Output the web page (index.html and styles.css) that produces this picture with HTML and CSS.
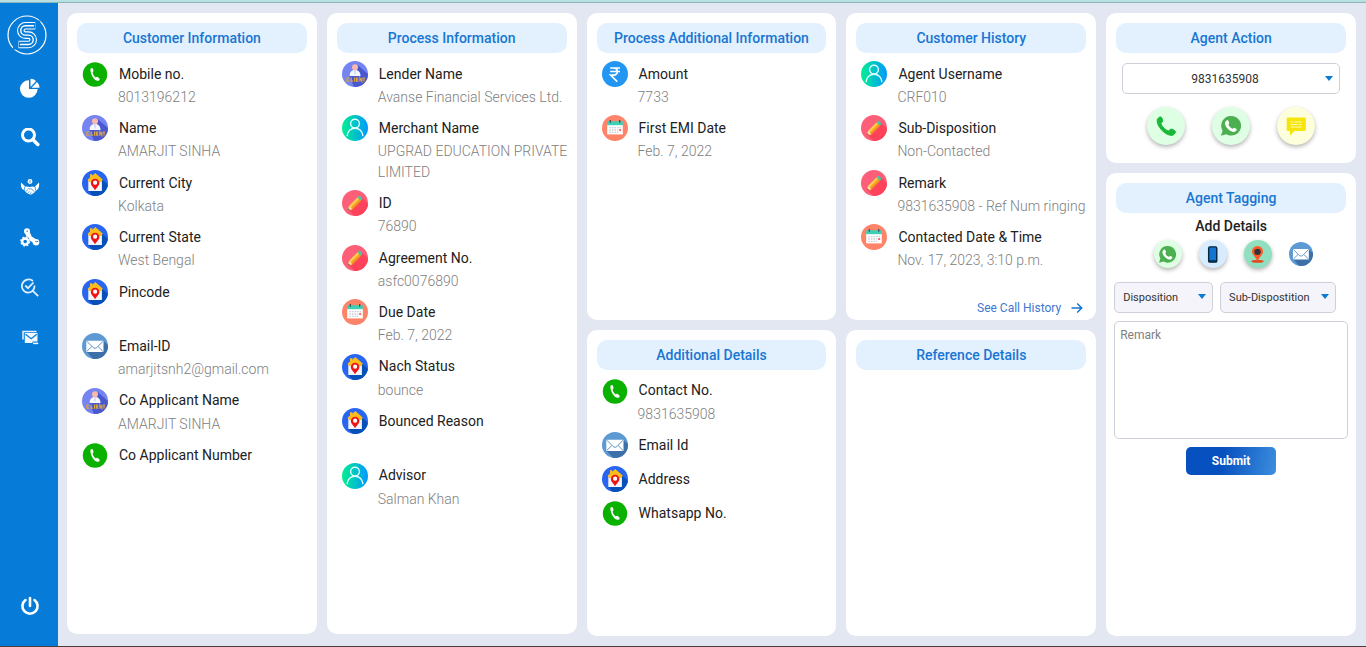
FILE: index.html
```html
<!DOCTYPE html>
<html lang="en">
<head>
<meta charset="utf-8">
<meta name="viewport" content="width=device-width, initial-scale=1">
<title>Agent Dashboard</title>
<link rel="stylesheet" href="styles.css">
</head>
<body>
<svg class="sprite" width="0" height="0" aria-hidden="true">
  <defs>
    <linearGradient id="g-user" x1="0" y1="0" x2="1" y2="0"><stop offset="0" stop-color="#00f090"/><stop offset="1" stop-color="#0098ff"/></linearGradient>
    <clipPath id="disc"><circle cx="13" cy="13" r="13"/></clipPath>
    <symbol id="i-phone" viewBox="0 0 26 26">
      <circle cx="13" cy="13.500" r="12.200" fill="#0ab100"/>
      <path d="M8.400 9.200C8 7.800 9.200 6.800 10.200 7c.7.2 1.300 2.200 1.300 3 0 .7-.9 1-.9 1.500.3 1.800 1.500 3.700 2.900 4.700.6.300 1.200-.6 2-.3.900.4 2.200 1.700 2.200 2.400-.2 1.300-1.800 1.900-3.200 1.300C11.300 18.200 8.900 13.400 8.400 9.200z" fill="#fff"/>
    </symbol>
    <symbol id="i-client" viewBox="0 0 26 26">
      <g clip-path="url(#disc)"><rect width="26" height="26" fill="#7584f1"/>
      <path d="M15.500 4L26 13v13H12L7 14z" fill="#4a58d0"/></g>
      <path d="M7.500 15C7.600 10.800 9.800 9 13 9s5.400 1.800 5.500 6z" fill="#f5f6ff"/>
      <path d="M11.800 9h2.600l-.5 4-.9 1-.8-1z" fill="#d8def5"/>
      <circle cx="13" cy="6.300" r="3" fill="#f9b9ab"/>
      <path d="M7.300 17H4.900v3.200h2.400M9.200 16.500v3.700h1.900M12.600 16.500v4.200M16.400 17h-2v3.200h2M14.500 18.600h1.600M17.900 20.700v-3.700l2 3.300v-3.500M20.900 17h2.200M22 17v3.500" fill="none" stroke="#d9a441" stroke-width="1.200"/>
    </symbol>
    <symbol id="i-home" viewBox="0 0 26 26">
      <g clip-path="url(#disc)"><rect width="26" height="26" fill="#2865f0"/>
      <path d="M19.500 9L26 15v11H11l-5-5z" fill="#0650b8"/></g>
      <path d="M6.300 9.500h13.600V21H6.300z" fill="#f4f5fb"/>
      <path d="M8 4.200h2.300v1.500L13.300 3l7.400 6.600-1.200 2.400H7L5.700 9.600 8 7.500z" fill="#fdbc1c"/>
      <path d="M13.100 20.300c-1.500-3-4.300-4.600-4.300-7.300a4.300 4.300 0 018.600 0c0 2.700-2.800 4.300-4.300 7.300z" fill="#ee1414"/>
      <circle cx="13.100" cy="12.700" r="2.100" fill="#fff"/>
    </symbol>
    <symbol id="i-mail" viewBox="0 0 26 26">
      <g clip-path="url(#disc)"><rect width="26" height="26" fill="#5d9ad3"/>
      <path d="M21.500 8L26 12v14H11l-6.500-7.500z" fill="#3d6fa8"/></g>
      <rect x="4.300" y="7.700" width="17.200" height="11.200" rx=".6" fill="#fff"/>
      <path d="M4.800 8.200l6.300 6.300c1.200 1 2.600 1 3.800 0l6.200-6.300M4.800 18.400l5-4.900M21 18.400l-4.900-4.900" fill="none" stroke="#4c86bf" stroke-width=".9"/>
    </symbol>
    <symbol id="i-user" viewBox="0 0 26 26">
      <circle cx="13" cy="13" r="13" fill="url(#g-user)"/>
      <circle cx="13" cy="8.600" r="4.400" fill="none" stroke="#e4fffa" stroke-width="1.400"/>
      <path d="M5.200 20.600c.3-4.400 3.600-7.300 7.800-7.300s7.500 2.900 7.800 7.300" fill="none" stroke="#e4fffa" stroke-width="1.400" stroke-linecap="round"/>
    </symbol>
    <symbol id="i-pencil" viewBox="0 0 26 26">
      <g clip-path="url(#disc)"><rect width="26" height="26" fill="#fe5f78"/>
      <path d="M19.500 7L26 13.500V26H12.500L6.500 19.800z" fill="#fe425a"/></g>
      <path d="M6 20.200l1.100-4.300 8.500-8.500 3.300 3.300-8.500 8.500z" fill="#fdb42a"/>
      <path d="M9.200 20.400l-1.100-1.100 9.700-9.700 1.100 1.100-8.500 8.500z" fill="#ee9420"/>
      <path d="M7.100 15.900l8.500-8.500 1.100 1.100-8.700 8.700z" fill="#ffd45c"/>
      <path d="M15.600 7.400l1.100-1.100c.5-.5 1.200-.5 1.700 0L20 7.900c.5.500.5 1.200 0 1.700l-1.100 1.100z" fill="#46c8a4"/>
      <path d="M6 20.200l1.100-4.300 3.200 3.300z" fill="#fbe0b5"/><path d="M6 20.200l.5-1.900 1.400 1.400z" fill="#704a43"/>
    </symbol>
    <symbol id="i-calendar" viewBox="0 0 26 26">
      <circle cx="13" cy="13" r="13" fill="#fd8469"/>
      <path d="M5.200 9.500h15.600v9.900H5.200z" fill="#fff"/><path d="M5.200 6.200h15.600v4H5.200z" fill="#3fcfb4"/>
      <path d="M8.300 5v2.700M17.700 5v2.700" stroke="#444b58" stroke-width="1.300"/>
      <path d="M7.300 12.600h11.800M7.300 15h8.900M7.300 17.400h8.900" stroke="#c9d0d8" stroke-width="1.300" stroke-dasharray="1.600 1"/>
      <path d="M17.200 14.200h1.900v1.700h-1.900z" fill="#ff4f4f"/>
    </symbol>
    <symbol id="i-rupee" viewBox="0 0 26 26">
      <circle cx="13" cy="13" r="13" fill="#2396f3"/>
      <path d="M8.200 7h9.800M8.200 10.500h9.800M8.400 7h3c5.200 0 5.200 7.100 0 7.100H8.700l6.500 6.600" fill="none" stroke="#fff" stroke-width="1.700"/>
    </symbol>
    <symbol id="i-whatsapp" viewBox="0 0 20 20">
      <path d="M10.200 0a9.800 9.800 0 11-4.800 18.300L0 19.800l1.600-5A9.800 9.800 0 0110.200 0z" fill="#4caf50"/>
      <path d="M4.700 5.300c1.300-1.600 2.600-1.300 3 .2l.6 1.500c.2.700-.9 1.200-.9 1.800.9 1.800 2.200 3.200 4 3.900.6.200 1.100-1.300 1.800-1l2 1c.6.300.6.900.3 1.600-1 1.900-3.300 2-5.500.9-2.800-1.400-4.600-3.400-5.700-6.200-.5-1.400-.4-2.600.4-3.700z" fill="#fff"/>
    </symbol>
  </defs>
</svg>

<div class="app">
  <nav class="sidebar" aria-label="Main">
    <a class="logo" href="#" aria-label="Home">
      <svg viewBox="0 0 40 40" fill="none">
        <circle cx="20" cy="20" r="19" stroke="#fff" stroke-width="1.200"/>
        <path d="M28 10.700H18.500a4.700 4.700 0 000 9.400h3a4.700 4.700 0 010 9.400H12" stroke="#fff" stroke-width="7.600" stroke-linecap="round"/>
        <path d="M28 10.700H18.500a4.700 4.700 0 000 9.400h3a4.700 4.700 0 010 9.400H12" stroke="#067bd8" stroke-width="5.400"/>
        <path d="M27 10.700H18.500a4.700 4.700 0 000 9.400h3a4.700 4.700 0 010 9.400H13" stroke="#fff" stroke-width="1.400"/>
        <path d="M28.300 5.500h5v10h-5zM6 24.500h5.500v10H6z" fill="#067bd8"/>
      </svg>
    </a>
    <ul class="nav-list">
      <li><a href="#" aria-label="Dashboard"><svg viewBox="0 0 20 20" fill="#fff"><path d="M9 2.200V11h8.600A8.800 8.800 0 119 2.200z"/><path d="M10.500.8v8.100l5.500-6A8.300 8.300 0 0010.500.8z"/><path d="M17 4l-5.500 5.700h8A8.500 8.500 0 0017 4z"/></svg></a></li>
      <li><a href="#" aria-label="Search"><svg viewBox="0 1 20 20" fill="none" stroke="#fff"><circle cx="8.500" cy="8" r="6" stroke-width="3"/><path d="M13 12.700l4.800 4.800" stroke-width="3.500" stroke-linecap="round"/></svg></a></li>
      <li><a href="#" aria-label="Settlements"><svg viewBox="0 0 20 20" fill="#fff"><circle cx="10" cy="3.500" r="2.400"/><path d="M10 2.200v2.600" stroke="#067bd8" stroke-width=".8"/><path d="M1 4.500l4.500 4.300c1.800-.9 3.300.7 4.500.2 1.600-.7 2.800-.9 4.500 0L19 4.500c.7 4-.8 7.500-3 8-1 1.700-2.600 3.100-4.200 3.700-1 .4-2.500.2-3.900-.7-1.200-.7-2.500-1.800-3.400-3.300C1.500 11.500.5 8 1 4.500z"/><path d="M4.800 8.700l-.6 3.500M15.200 8.700l.5 3.800M8.200 10.500c1.500 1 2.500-.4 3.700.8l2.700 2.500M6 13.200l2-1.500M8 14.700l1.600-1.500M10 15.700l1.400-1.300" stroke="#067bd8" stroke-width=".7" fill="none"/></svg></a></li>
      <li><a href="#" aria-label="Process setup"><svg viewBox="0 0 20 20"><g fill="#fff"><circle cx="7" cy="3.300" r="3"/><circle cx="16" cy="14.300" r="3.300"/><path d="M4.700 4l4.500-1.200 2.500 5.700 5.500 3.500-1.500 4-6.200-3.500-3-3.500z"/></g><circle cx="5.200" cy="13.500" r="5" fill="#067bd8"/><circle cx="5.200" cy="13.500" r="3" fill="none" stroke="#fff" stroke-width="2.400"/><circle cx="5.200" cy="13.500" r="4.400" fill="none" stroke="#fff" stroke-width="1.300" stroke-dasharray="1.900 1.550"/><path d="M15.300 13.200l1.400.6 1.500-.7M6.500 3.600l1.500-.8" stroke="#067bd8" fill="none"/></svg></a></li>
      <li><a href="#" aria-label="Review"><svg viewBox="0 0 20 20" fill="none" stroke="#e0f0ff" stroke-width="1.800"><path d="M13 3A6.700 6.700 0 107.800 14.700 6.700 6.700 0 0014.500 7.500M12.800 12.800l5.400 5.400"/><path d="M5.300 7.500l2.700 2.700 5.500-5.700"/></svg></a></li>
      <li><a href="#" aria-label="Messages"><svg viewBox="0 0 20 20"><path d="M3 11.500V3.500h13.500" fill="none" stroke="#e6f3ff" stroke-width="1.500"/><path d="M4.800 5h12.700v10H4.800z" fill="#f2f9ff"/><path d="M5.500 6.200l5.700 4.600 5.600-4.600" fill="none" stroke="#067bd8" stroke-width="1.200"/><path d="M12.500 13.500h6v3.500h-6z" fill="#067bd8"/><path d="M13 15.400h5.200" stroke="#fff" stroke-width="1.500"/></svg></a></li>
    </ul>
    <a class="power" href="#" aria-label="Log out"><svg viewBox="0 0 20 20" fill="none" stroke="#fff" stroke-width="2.600" stroke-linecap="round"><path d="M5.500 4a7.600 7.600 0 109 0M10 2v8"/></svg></a>
  </nav>

  <main class="board">
    <section class="card card-tall">
      <h2>Customer Information</h2>
      <dl>
        <div><dt><svg><use href="#i-phone"/></svg>Mobile no.</dt><dd>8013196212</dd></div>
        <div><dt><svg><use href="#i-client"/></svg>Name</dt><dd>AMARJIT SINHA</dd></div>
        <div><dt><svg><use href="#i-home"/></svg>Current City</dt><dd>Kolkata</dd></div>
        <div><dt><svg><use href="#i-home"/></svg>Current State</dt><dd>West Bengal</dd></div>
        <div><dt><svg><use href="#i-home"/></svg>Pincode</dt><dd></dd></div>
        <div><dt><svg><use href="#i-mail"/></svg>Email-ID</dt><dd>amarjitsnh2@gmail.com</dd></div>
        <div><dt><svg><use href="#i-client"/></svg>Co Applicant Name</dt><dd>AMARJIT SINHA</dd></div>
        <div><dt><svg><use href="#i-phone"/></svg>Co Applicant Number</dt><dd></dd></div>
      </dl>
    </section>

    <section class="card card-tall">
      <h2>Process Information</h2>
      <dl>
        <div><dt><svg><use href="#i-client"/></svg>Lender Name</dt><dd>Avanse Financial Services Ltd.</dd></div>
        <div><dt><svg><use href="#i-user"/></svg>Merchant Name</dt><dd>UPGRAD EDUCATION PRIVATE LIMITED</dd></div>
        <div><dt><svg><use href="#i-pencil"/></svg>ID</dt><dd>76890</dd></div>
        <div><dt><svg><use href="#i-pencil"/></svg>Agreement No.</dt><dd>asfc0076890</dd></div>
        <div><dt><svg><use href="#i-calendar"/></svg>Due Date</dt><dd>Feb. 7, 2022</dd></div>
        <div><dt><svg><use href="#i-home"/></svg>Nach Status</dt><dd>bounce</dd></div>
        <div><dt><svg><use href="#i-home"/></svg>Bounced Reason</dt><dd></dd></div>
        <div><dt><svg><use href="#i-user"/></svg>Advisor</dt><dd>Salman Khan</dd></div>
      </dl>
    </section>

    <div class="column">
      <section class="card half">
        <h2>Process Additional Information</h2>
        <dl>
          <div><dt><svg><use href="#i-rupee"/></svg>Amount</dt><dd>7733</dd></div>
          <div><dt><svg><use href="#i-calendar"/></svg>First EMI Date</dt><dd>Feb. 7, 2022</dd></div>
        </dl>
      </section>
      <section class="card half">
        <h2>Additional Details</h2>
        <dl>
          <div><dt><svg><use href="#i-phone"/></svg>Contact No.</dt><dd>9831635908</dd></div>
          <div><dt><svg><use href="#i-mail"/></svg>Email Id</dt></div>
          <div><dt><svg><use href="#i-home"/></svg>Address</dt></div>
          <div><dt><svg><use href="#i-phone"/></svg>Whatsapp No.</dt></div>
        </dl>
      </section>
    </div>

    <div class="column">
      <section class="card half">
        <h2>Customer History</h2>
        <dl>
          <div><dt><svg><use href="#i-user"/></svg>Agent Username</dt><dd>CRF010</dd></div>
          <div><dt><svg><use href="#i-pencil"/></svg>Sub-Disposition</dt><dd>Non-Contacted</dd></div>
          <div><dt><svg><use href="#i-pencil"/></svg>Remark</dt><dd>9831635908 - Ref Num ringing</dd></div>
          <div><dt><svg><use href="#i-calendar"/></svg>Contacted Date &amp; Time</dt><dd>Nov. 17, 2023, 3:10 p.m.</dd></div>
        </dl>
        <a class="more" href="#">See Call History <svg viewBox="0 0 12 12" fill="none" stroke="#1677d2" stroke-width="1.500"><path d="M.5 6h10M6.200 1.500L10.700 6l-4.500 4.500"/></svg></a>
      </section>
      <section class="card half">
        <h2>Reference Details</h2>
      </section>
    </div>

    <div class="column">
      <section class="card">
        <h2>Agent Action</h2>
        <div class="select number">
          <select aria-label="Phone number"><option>9831635908</option></select>
        </div>
        <div class="actions">
          <button class="round green" type="button" aria-label="Call"><svg viewBox="0 0 20 20"><path d="M1.200 3.700C2 1.800 3.700.5 5 1c1 .4 1.700 3.200 1.700 4.200 0 1.200-2 1.700-1.800 2.600 1.300 3 4 5.900 7.200 7.200 1 .3 1.800-2 3-1.900 1.100.1 3.700 1.200 4.300 2.300.7 1.300-1.500 3.700-3.500 4C9.200 19.500.4 10.500 1.200 3.700z" fill="#19b837" stroke="#19b837"/></svg></button>
          <button class="round green" type="button" aria-label="WhatsApp"><svg><use href="#i-whatsapp"/></svg></button>
          <button class="round yellow" type="button" aria-label="Message"><svg viewBox="0 0 20 20"><path d="M2 1.500h16.500c.8 0 1.300.5 1.300 1.300v11c0 .8-.5 1.300-1.300 1.300H8.500L4 19.500v-4.400H2c-.8 0-1.300-.5-1.300-1.300v-11c0-.8.5-1.300 1.300-1.300z" fill="#f5e50a"/><path d="M4.600 6h2.500M8.300 6h7.200M4.600 8.500h7.200M13 8.500h2.500M4.600 11h10.900" stroke="#fffbd0" stroke-width=".9"/></svg></button>
        </div>
      </section>
      <section class="card grow">
        <h2>Agent Tagging</h2>
        <form class="tagging">
          <h3>Add Details</h3>
          <div class="channels">
            <button class="round small green" type="button" aria-label="Add WhatsApp"><svg><use href="#i-whatsapp"/></svg></button>
            <button class="round small blue" type="button" aria-label="Add mobile"><svg viewBox="0 0 20 20"><rect x="5.500" y="1" width="9.500" height="18" rx="1.500" fill="#1476d0" stroke="#07263f" stroke-width="1.700"/><path d="M5.500 16.800h9.500v1.700H5.500z" fill="#07263f"/></svg></button>
            <button class="round small mint" type="button" aria-label="Add address"><svg viewBox="0 0 20 20"><ellipse cx="10" cy="18" rx="7.500" ry="1.800" fill="#e04a1e"/><path d="M10 18C8 13 3.500 10.500 3.500 6.500a6.500 6.500 0 0113 0C16.500 10.500 12 13 10 18z" fill="#ff5a26"/><circle cx="10" cy="6.900" r="3.800" fill="#30343b"/></svg></button>
            <button class="mail" type="button" aria-label="Add email"><svg><use href="#i-mail"/></svg></button>
          </div>
          <div class="choices">
            <div class="select tint"><select aria-label="Disposition"><option>Disposition</option></select></div>
            <div class="select tint"><select aria-label="Sub-Dispostition"><option>Sub-Dispostition</option></select></div>
          </div>
          <textarea placeholder="Remark" aria-label="Remark"></textarea>
          <button class="submit" type="button">Submit</button>
        </form>
      </section>
    </div>
  </main>
</div>
</body>
</html>
```
FILE: styles.css
```css
* { box-sizing: border-box; }

body {
  margin: 0;
  min-height: 100vh;
  display: flex;
  flex-direction: column;
  border-bottom: 1px solid #4e3d3f;
  background: #e3e7f2;
  color: #212121;
  font: 14px/1.46 Roboto, sans-serif;
}

body::before {
  content: "";
  height: 2px;
  background: #b8e0e4;
  border-bottom: 1px solid #8db6b9;
}

h2, h3, dl, dd, ul { margin: 0; padding: 0; }
button, select, textarea { font-family: inherit; }
button { padding: 0; border: 0; cursor: pointer; }
a { text-decoration: none; }
svg { display: block; }
.sprite { position: absolute; }

.app { flex: 1; display: flex; }

/* Sidebar */
.sidebar {
  width: 58px;
  flex: none;
  display: flex;
  flex-direction: column;
  padding: 12px 0 30px 7px;
  background: #067bd8;
}
.logo svg { width: 40px; height: 40px; }
.nav-list {
  list-style: none;
  display: flex;
  flex-direction: column;
  gap: 30px;
  padding: 23px 0 0 13px;
}
.nav-list svg, .power svg { width: 20px; height: 20px; }
.power { margin: auto 0 0 13px; }

/* Cards */
.board {
  flex: 1;
  display: grid;
  grid-template-columns: repeat(5, minmax(0, 1fr));
  gap: 10px;
  padding: 10px 10px 10px 9px;
}
.column { display: flex; flex-direction: column; gap: 10px; }
.card {
  display: flex;
  flex-direction: column;
  padding: 10px;
  border-radius: 10px;
  background: #fff;
}
.card-tall { margin-bottom: 2px; }
.half { flex: 1 1 0; }
.grow { flex: 1; }
.card h2 {
  border-radius: 10px;
  background: #e3f1fe;
  color: #1976d2;
  font-size: 14px;
  font-weight: 500;
  line-height: 30px;
  text-align: center;
}

dl { margin-right: -6px; padding: 8px 0 0 5px; }
dl div { padding-bottom: 8px; }
dt { display: flex; align-items: center; gap: 11px; height: 26px; }
dt svg { width: 26px; height: 26px; flex: none; }
dd { padding-left: 36px; color: #808080; font-weight: 300; }
dd:empty::before { content: "\00a0"; }

.more {
  display: flex;
  align-items: center;
  gap: 10px;
  margin: auto 3px -4px auto;
  color: #3f78d0;
  font-size: 12px;
  line-height: 12px;
}
.more svg { width: 12px; height: 12px; }

/* Controls */
.select { position: relative; }
.select::after {
  content: "";
  position: absolute;
  top: 12px;
  right: 7px;
  border: 4px solid transparent;
  border-top: 5px solid #0b7ad5;
  border-bottom: 0;
  pointer-events: none;
}
.select select {
  appearance: none;
  width: 100%;
  height: 31px;
  padding: 0 8px;
  border: 1px solid #cfcfd9;
  border-radius: 5px;
  background: #fff;
  color: #333;
  font-size: 12px;
}
.number { margin: 10px 6px 0; }
.number select { padding-right: 20px; text-align-last: center; }
.number::after { top: 13px; }
.select.tint select { background: #f4f4fa; font-size: 11px; }

.round {
  display: grid;
  place-items: center;
  width: 38px;
  height: 38px;
  border-radius: 50%;
  box-shadow: 0 2px 4px #0000004d;
}
.round svg { width: 20px; height: 20px; }
.round.small { width: 28px; height: 28px; }
.small svg { width: 17px; height: 17px; }
.green { background: #dfffe5; }
.yellow { background: #fdffdc; }
.blue { background: #d8ecff; }
.mint { background: #90e0c0; }

.actions {
  display: flex;
  justify-content: center;
  gap: 27px;
  padding: 13px 0 8px;
}

.tagging { display: flex; flex-direction: column; margin: 0 -2px; }
.tagging h3 {
  padding-top: 3px;
  font-size: 14px;
  font-weight: 500;
  line-height: 20px;
  text-align: center;
}
.channels {
  display: flex;
  justify-content: center;
  align-items: center;
  gap: 17px;
  padding: 4px 0 0 4px;
}
.mail { border-radius: 50%; background: none; }
.mail svg { width: 24px; height: 24px; }
.choices {
  display: grid;
  grid-template-columns: 99fr 116fr;
  gap: 7px;
  padding: 14px 12px 8px 0;
}
textarea {
  height: 118px;
  padding: 6px 5px;
  border: 1px solid #cfcfd9;
  border-radius: 5px;
  resize: none;
  font-size: 12px;
}
textarea::placeholder { color: #808080; }
.submit {
  align-self: center;
  width: 90px;
  height: 28px;
  margin-top: 8px;
  border-radius: 5px;
  background: linear-gradient(100deg, #0750bf 40%, #3c8ede);
  color: #fff;
  font-size: 12px;
  font-weight: 700;
}
```
